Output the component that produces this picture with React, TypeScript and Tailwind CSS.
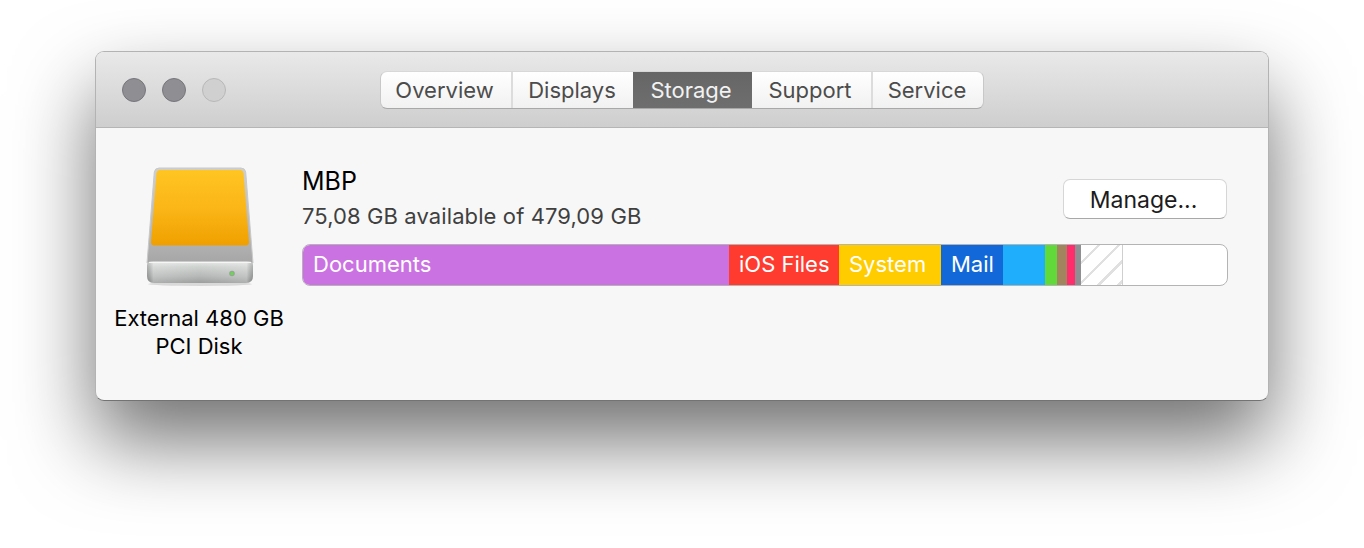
const font = "font-['Inter','Liberation_Sans',sans-serif]";

function Drive() {
  return (
    <svg width="120" height="130" viewBox="140 160 120 130" className="block ml-[2px]">
      <defs>
        <linearGradient id="orange" x1="0" y1="0" x2="0" y2="1">
          <stop offset="0" stopColor="#ffc522" />
          <stop offset="0.5" stopColor="#fbb617" />
          <stop offset="1" stopColor="#efa000" />
        </linearGradient>
        <linearGradient id="body" x1="0" y1="0" x2="0" y2="1">
          <stop offset="0" stopColor="#cfcfcf" />
          <stop offset="0.75" stopColor="#b4b4b4" />
          <stop offset="1" stopColor="#a6a6a6" />
        </linearGradient>
        <linearGradient id="front" x1="0" y1="0" x2="0" y2="1">
          <stop offset="0" stopColor="#e4e6e4" />
          <stop offset="0.25" stopColor="#ccd0cd" />
          <stop offset="0.7" stopColor="#b0b3b1" />
          <stop offset="1" stopColor="#969997" />
        </linearGradient>
        <linearGradient id="sheen" x1="0" y1="0" x2="1" y2="0">
          <stop offset="0" stopColor="#000000" stopOpacity="0.16" />
          <stop offset="0.06" stopColor="#ffffff" stopOpacity="0.22" />
          <stop offset="0.5" stopColor="#ffffff" stopOpacity="0.05" />
          <stop offset="0.94" stopColor="#ffffff" stopOpacity="0.22" />
          <stop offset="1" stopColor="#000000" stopOpacity="0.16" />
        </linearGradient>
      </defs>
      <ellipse cx="200" cy="284" rx="52" ry="2" fill="#000000" opacity="0.12" />
      <path d="M159 168H241Q245 168 245.7 172L253 263H147L154.3 172Q155 168 159 168Z" fill="url(#body)" stroke="#c9c9c9" strokeWidth="1" />
      <path d="M160 170H240Q243 170 243.5 173L249 242Q249 245.5 246 245.5H154Q151 245.5 151 242L156.5 173Q157 170 160 170Z" fill="url(#orange)" />
      <path d="M151 261.5H249Q253 261.5 253 265.5V276Q253 283 246 283H154Q147 283 147 276V265.5Q147 261.5 151 261.5Z" fill="url(#front)" />
      <path d="M151 261.5H249Q253 261.5 253 265.5V276Q253 283 246 283H154Q147 283 147 276V265.5Q147 261.5 151 261.5Z" fill="url(#sheen)" />
      <path d="M149 262.5H251" stroke="#f6f6f6" strokeWidth="1" />
      <circle cx="232" cy="273.5" r="2.8" fill="#93a893" />
      <circle cx="232" cy="273.5" r="1.5" fill="#5fe23f" />
    </svg>
  );
}

const tabs = [
  { label: "Overview", w: "w-[130px] pr-[3px]" },
  { label: "Displays", w: "w-[122px] pr-[2px]" },
  { label: "Storage", w: "w-[119px] pr-[3px]", active: true },
  { label: "Support", w: "w-[119px] pr-[3px]" },
  { label: "Service", w: "w-[112px] pr-[2px]" },
];

const segments = [
  { label: "Documents", w: "w-[426px] pl-[10px] pb-[2px]", bg: "bg-[#cb72e3]" },
  { label: "iOS Files", w: "w-[110px] pl-[10px] pb-[2px]", bg: "bg-[#ff3b30]" },
  { label: "System", w: "w-[102px] pl-[10px] pb-[2px]", bg: "bg-[#ffcc00]" },
  { label: "Mail", w: "w-[62px] pl-[10px] pb-[2px]", bg: "bg-[#1268d8]" },
  { label: "", w: "w-[42px]", bg: "bg-[#1eaefb]" },
  { label: "", w: "w-[12px]", bg: "bg-[#62d93a]" },
  { label: "", w: "w-[10px]", bg: "bg-[#a2845e]" },
  { label: "", w: "w-[8px]", bg: "bg-[#ff2d6b]" },
  { label: "", w: "w-[6px]", bg: "bg-[#8e8e93]" },
];

export default function App() {
  return (
    <div className={`${font} w-[1364px] h-[548px] bg-white overflow-hidden pl-[95px] pt-[51px]`}>
      <div className="w-[1174px] h-[350px] rounded-[9px] border border-[#b3b3b3] border-b-[#737373] bg-[#f7f7f7] shadow-[0_40px_80px_rgba(0,0,0,0.56)] overflow-hidden">
        <div className="h-[76px] border-b border-[#b5b5b5] bg-gradient-to-b from-[#e9e9e9] to-[#cecece] flex items-center pl-[26px]">
          <div className="flex gap-[16px]">
            <div className="w-[24px] h-[24px] rounded-full bg-[#8f8e93] border border-[#77767b]" />
            <div className="w-[24px] h-[24px] rounded-full bg-[#8f8e93] border border-[#77767b]" />
            <div className="w-[24px] h-[24px] rounded-full bg-[#d0d0d0] border border-[#b8b8b8]" />
          </div>
          <div className="ml-[154px] mt-[1px] flex h-[38px] rounded-[7px] border-b border-b-[#a8a8a8] border-t border-t-[#d8d8d8] border-x border-x-[#c8c8c8] overflow-hidden bg-gradient-to-b from-white to-[#f1f1f1]">
            {tabs.map((t, i) => (
              <div
                key={t.label}
                className={`${t.w} flex items-center justify-center text-[22px] ${
                  t.active
                    ? "bg-gradient-to-b from-[#666666] to-[#6e6e6e] text-[#f2f2f2]"
                    : "text-[#4c4c4c]"
                } ${i > 0 && !t.active && !tabs[i - 1].active ? "border-l-2 border-[#dcdcdc]" : ""}`}
              >
                {t.label}
              </div>
            ))}
          </div>
        </div>

        <div className="flex">
          <div className="w-[206px] flex flex-col items-center pt-[32px]">
            <Drive />
            <div className="mt-[14px] text-[22px] leading-[28px] text-black text-center whitespace-nowrap">
              External 480 GB
              <br />
              PCI Disk
            </div>
          </div>

          <div className="w-[926px] pt-[37px]">
            <div className="flex justify-between items-start">
              <div>
                <div className="text-[25px] leading-[32px] text-black">MBP</div>
                <div className="mt-[5px] text-[22px] leading-[28px] tracking-[0.1px] text-[#3f3f3f] whitespace-nowrap">75,08 GB available of 479,09 GB</div>
              </div>
              <div className="mt-[14px] mr-[1px] w-[164px] h-[40px] rounded-[7px] bg-white border border-[#d6d6d6] border-b-[#a8a8a8] flex items-center justify-center pr-[3px] pt-[3px] text-[23px] text-[#1c1c1c]">
                Manage...
              </div>
            </div>
            <div className="mt-[14px] h-[42px] w-[926px] rounded-[8px] border border-[#b4b4b4] bg-white flex overflow-hidden">
              {segments.map((s, i) => (
                <div
                  key={i}
                  className={`${s.w} ${s.bg} flex items-center text-[22px] text-white whitespace-nowrap`}
                >
                  {s.label}
                </div>
              ))}
              <div className="w-[42px] border-r border-[#cfcfcf] bg-[repeating-linear-gradient(135deg,#ffffff_0px,#ffffff_11.5px,#e0e0e0_11.5px,#e0e0e0_14px)]" />
            </div>
          </div>
        </div>
      </div>
    </div>
  );
}
